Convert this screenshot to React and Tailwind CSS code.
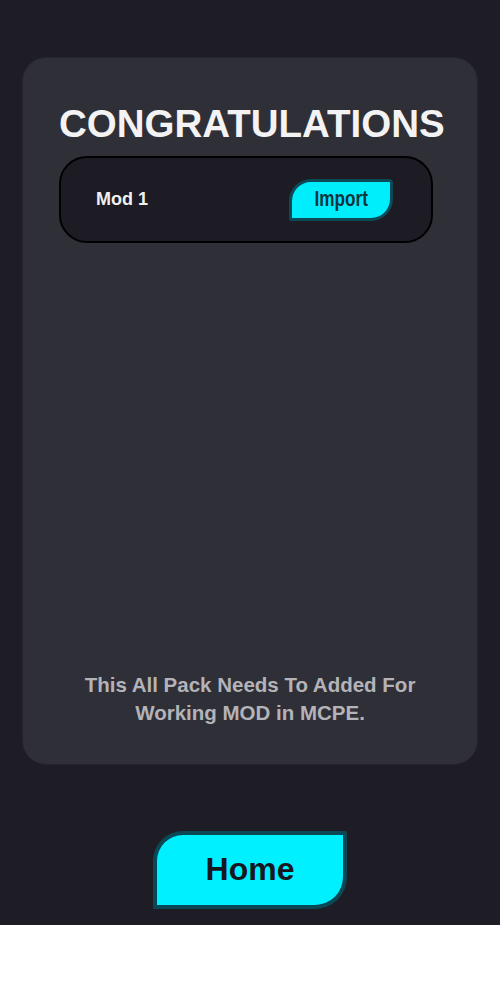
const sans = { fontFamily: '"Liberation Sans", Arial, sans-serif' };

const ModRow = ({ name }) => (
  <div className="flex h-[87px] w-[374px] items-center justify-between rounded-[28px] border-2 border-black bg-[#1d1c24] pl-[35px] pr-[38px]">
    <span className="text-[18px] font-bold text-[#f0f0f0]">{name}</span>
    <button
      type="button"
      className="flex h-[42px] w-[104px] items-center justify-center rounded-tl-[22px] rounded-tr-[4px] rounded-br-[22px] rounded-bl-[2px] border-[3px] border-[#0c4a58] bg-[#00eefc] pb-[3px] text-[#0f3440]"
    >
      <span className="inline-block scale-x-[0.78] text-[22px] font-bold">Import</span>
    </button>
  </div>
);

export default function App() {
  return (
    <div className="flex h-[925px] flex-col items-center bg-[#1e1d25]" style={sans}>
      <div className="mt-[57px] flex h-[708px] w-[456px] flex-col rounded-[24px] border border-[#25242c] bg-[#2f2f38] pl-[36px] pr-[44px]">
        <h1 className="mt-[47px] mr-[-8px] text-center text-[38.5px] font-bold leading-[38px] text-[#f3f3f3]">
          CONGRATULATIONS
        </h1>
        <div className="mt-[13px]">
          <ModRow name="Mod 1" />
        </div>
        <p className="mt-auto mb-[37px] mr-[-8px] text-center text-[20.5px] font-bold leading-[28px] text-[#b3b3b8]">
          This All Pack Needs To Added For
          <br />
          Working MOD in MCPE.
        </p>
      </div>
      <button
        type="button"
        className="mt-[66px] flex h-[78px] w-[194px] items-center justify-center rounded-tl-[30px] rounded-tr-[2px] rounded-br-[32px] rounded-bl-[0px] border-4 border-[#0b4855] bg-[#00f0ff] pb-[2px] text-[32px] font-bold text-[#17171f]"
      >
        Home
      </button>
    </div>
  );
}
